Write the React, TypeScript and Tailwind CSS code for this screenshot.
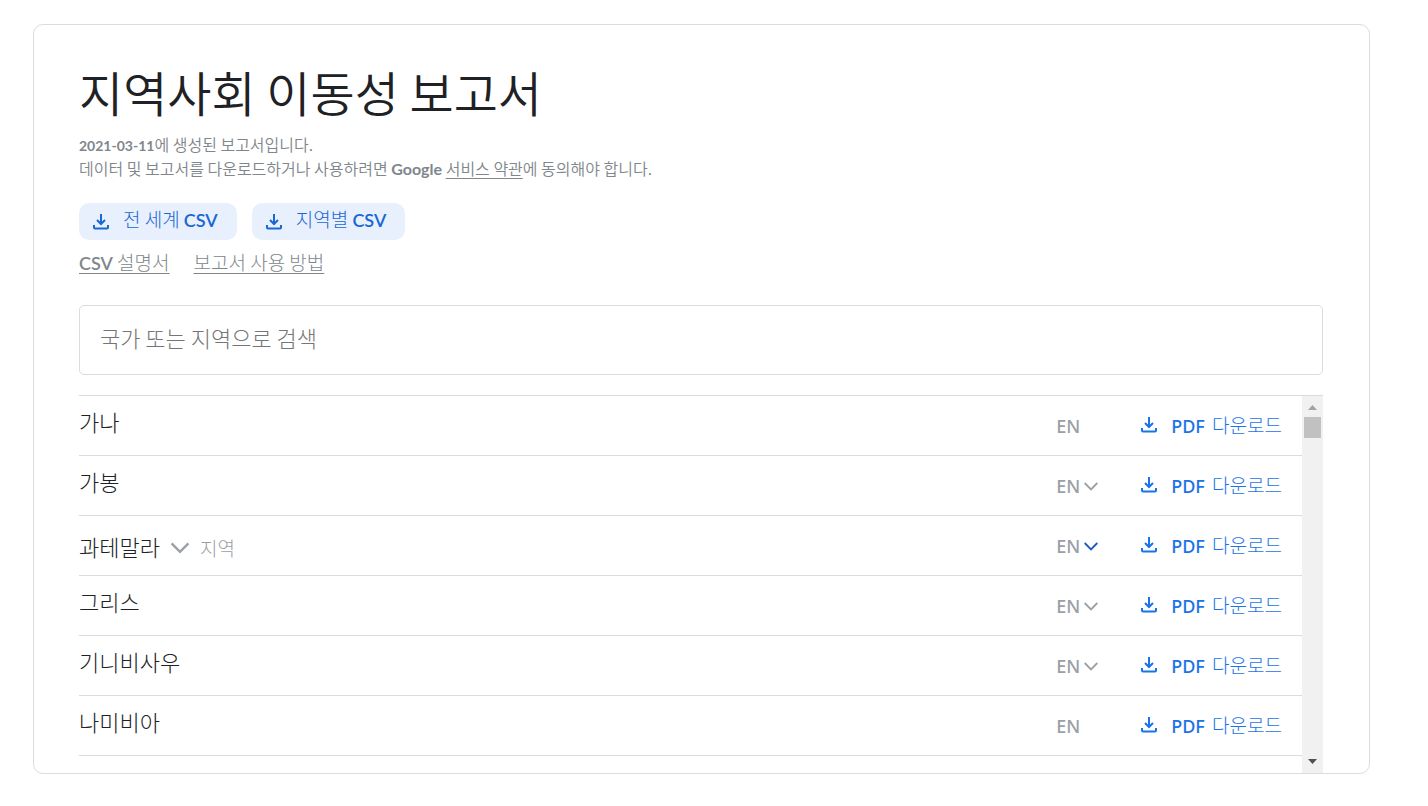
import { useRef, useState } from 'react';

type Region = { name: string; languages: boolean; active?: boolean; subregions?: boolean };

const regions: Region[] = [
  { name: '가나', languages: false },
  { name: '가봉', languages: true },
  { name: '과테말라', languages: true, active: true, subregions: true },
  { name: '그리스', languages: true },
  { name: '기니비사우', languages: true },
  { name: '나미비아', languages: false },
];

function DownloadIcon() {
  return (
    <svg className="h-4 w-4 shrink-0" viewBox="0 0 16 16" fill="none" stroke="currentColor" strokeWidth="2" aria-hidden="true">
      <path d="M8 0v9.5" />
      <path d="M4 6l4 4 4-4" />
      <path d="M1 11v2.5q0 1 1 1h12q1 0 1-1V11" />
    </svg>
  );
}

function Chevron({ className }: { className: string }) {
  return (
    <svg className={className} viewBox="0 0 14 9" fill="none" stroke="currentColor" strokeWidth="1.8" aria-hidden="true">
      <path d="M.7 1l6.3 6.4L13.3 1" />
    </svg>
  );
}

function CsvButton({ label }: { label: string }) {
  return (
    <button className="flex h-[37px] items-center gap-3.5 rounded-[10px] bg-[#e8f0fe] pr-[19px] pl-3.5 text-[#1967d2]">
      <DownloadIcon />
      <span className="pb-1 text-[19px] leading-6 font-light whitespace-nowrap">
        {label} <span className="font-['Lato'] text-lg leading-6 font-semibold">CSV</span>
      </span>
    </button>
  );
}

function RegionRow({ region }: { region: Region }) {
  return (
    <li className="flex h-15 items-center border-b border-[#dadce0]">
      <div className={region.subregions ? 'flex flex-1 items-center pt-1' : 'flex flex-1 items-center pb-1.5'}>
        <span className="pb-1 text-[22px] leading-7 font-light">{region.name}</span>
        {region.subregions && (
          <button className="ml-2.5 flex items-center gap-2.5 text-[19px] leading-7 font-light text-[#9aa0a6]">
            <Chevron className="h-3 w-5" />
            지역
          </button>
        )}
      </div>
      <button className="flex w-[85px] items-center gap-1 font-['Noto_Sans'] text-lg leading-7 font-medium text-[#9aa0a6]">
        EN
        {region.languages && <Chevron className={region.active ? 'mt-0.5 h-[9px] w-3.5 text-[#185abc]' : 'mt-0.5 h-[9px] w-3.5'} />}
      </button>
      <a href="#pdf" className="mr-5 flex items-center gap-3.5 text-[#1a73e8]">
        <span className="pb-0.5"><DownloadIcon /></span>
        <span className="text-[19px] leading-7 font-light whitespace-nowrap">
          <span className="mr-[3px] font-['Noto_Sans'] text-lg leading-7 font-medium">PDF</span> 다운로드
        </span>
      </a>
    </li>
  );
}

export default function App() {
  const [query, setQuery] = useState('');
  const list = useRef<HTMLUListElement>(null);
  const scroll = (top: number) => list.current?.scrollBy({ top });

  return (
    <main className="flex h-screen flex-col bg-white pt-6 pr-[58px] pb-8 pl-[33px] font-['Noto_Sans_CJK_KR',sans-serif] text-[#202124]">
      <section className="flex min-h-0 flex-1 flex-col rounded-[10px] border border-[#dadce0] pt-9 pr-[46px] pl-[45px]">
        <h1 className="text-5xl leading-[60px] font-[350]">지역사회 이동성 보고서</h1>
        <div className="mt-3 text-base leading-[23px] font-[350] text-[#80868b]">
          <p>
            <span className="font-['Lato'] text-sm leading-[23px] font-bold">2021-03-11</span>에 생성된 보고서입니다.
          </p>
          <p>
            데이터 및 보고서를 다운로드하거나 사용하려면{' '}
            <span className="font-['Lato'] leading-[23px] font-bold">Google</span>{' '}
            <a href="#terms" className="underline underline-offset-3">서비스 약관</a>에 동의해야 합니다.
          </p>
        </div>
        <div className="mt-[23px] flex gap-[15px]">
          <CsvButton label="전 세계" />
          <CsvButton label="지역별" />
        </div>
        <div className="mt-2 flex gap-6 text-[19px] leading-7 font-light text-[#80868b]">
          <a href="#csv-docs" className="underline underline-offset-3">
            <span className="font-['Lato'] text-lg leading-7 font-semibold">CSV</span> 설명서
          </a>
          <a href="#guide" className="underline underline-offset-3">보고서 사용 방법</a>
        </div>
        <input
          type="search"
          aria-label="국가 또는 지역으로 검색"
          placeholder="국가 또는 지역으로 검색"
          value={query}
          onChange={(event) => setQuery(event.target.value)}
          className="mt-7 h-[70px] shrink-0 rounded-[5px] border border-[#dadce0] px-5 pb-1.5 text-[22px] font-light placeholder:text-[#757575]"
        />
        <div className="mt-5 flex min-h-0 flex-1 border-t border-[#dadce0]">
          <ul ref={list} className="flex-1 overflow-y-auto [scrollbar-width:none]">
            {regions.filter((region) => region.name.includes(query)).map((region) => (
              <RegionRow key={region.name} region={region} />
            ))}
          </ul>
          <div className="flex w-[21px] flex-col items-center bg-[#f1f1f1]">
            <button aria-label="위로" onClick={() => scroll(-60)} className="flex h-[21px] w-full shrink-0 items-center justify-center pt-0.5 text-[#a3a3a3]">
              <svg className="h-[5px] w-[9px]" viewBox="0 0 9 5" fill="currentColor"><path d="M0 5L4.5 0 9 5z" /></svg>
            </button>
            <div className="h-[21px] w-[17px] shrink-0 bg-[#c1c1c1]" />
            <button aria-label="아래로" onClick={() => scroll(60)} className="mt-auto flex h-[21px] w-full shrink-0 items-center justify-center pb-0.5 text-[#505050]">
              <svg className="h-[5px] w-[9px]" viewBox="0 0 9 5" fill="currentColor"><path d="M0 0h9L4.5 5z" /></svg>
            </button>
          </div>
        </div>
      </section>
    </main>
  );
}
